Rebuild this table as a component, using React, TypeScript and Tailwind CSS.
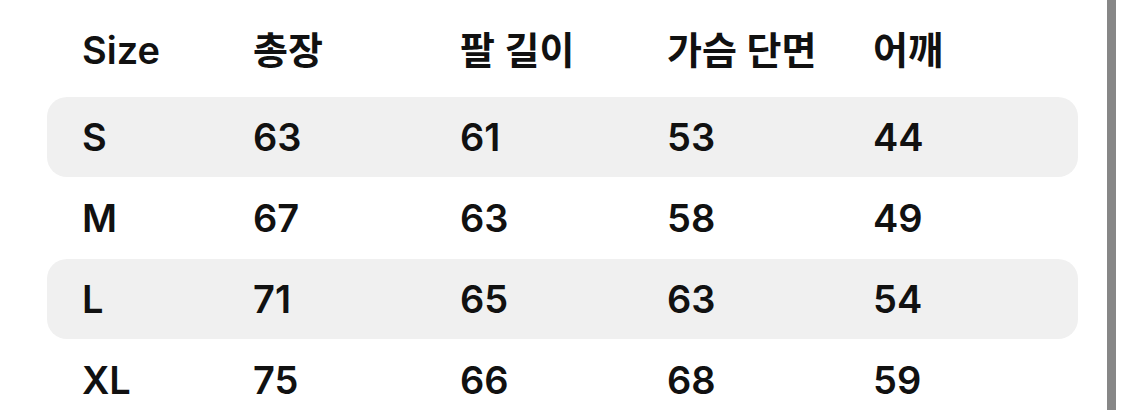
import React from 'react'

const headers = ['Size', '총장', '팔 길이', '가슴 단면', '어깨']

const rows = [
    ['S', '63', '61', '53', '44'],
    ['M', '67', '63', '58', '49'],
    ['L', '71', '65', '63', '54'],
    ['XL', '75', '66', '68', '59'],
]

const cols = 'grid grid-cols-[171px_207px_207px_206px_1fr] items-center px-[35px]'

const App = () => {
    return (
        <div
            className="w-[1125px] h-[410px] flex bg-white overflow-hidden text-[#111111] text-[38px] font-semibold leading-none"
            style={{ fontFamily: 'Inter, "Noto Sans CJK KR", sans-serif' }}
        >
            {/* table */}
            <div className="w-[1107px] pl-[47px] pr-[29px] flex flex-col">
                <div className={`${cols} h-[97px] shrink-0 pt-[3px]`}>
                    {headers.map((h) => (
                        <span key={h} className="whitespace-nowrap">{h}</span>
                    ))}
                </div>
                <div className="flex flex-col gap-[1px]">
                    {rows.map((r, i) => (
                        <div
                            key={r[0]}
                            className={`${cols} h-[80px] shrink-0 rounded-[20px] ${i % 2 === 0 ? 'bg-[#f0f0f0]' : ''}`}
                        >
                            {r.map((c, j) => (
                                <span key={j}>{c}</span>
                            ))}
                        </div>
                    ))}
                </div>
            </div>
            {/* scroll edge */}
            <div className="w-[9px] h-full shrink-0 bg-[#878787]" />
            <div className="flex-1" />
        </div>
    )
}

export default App
